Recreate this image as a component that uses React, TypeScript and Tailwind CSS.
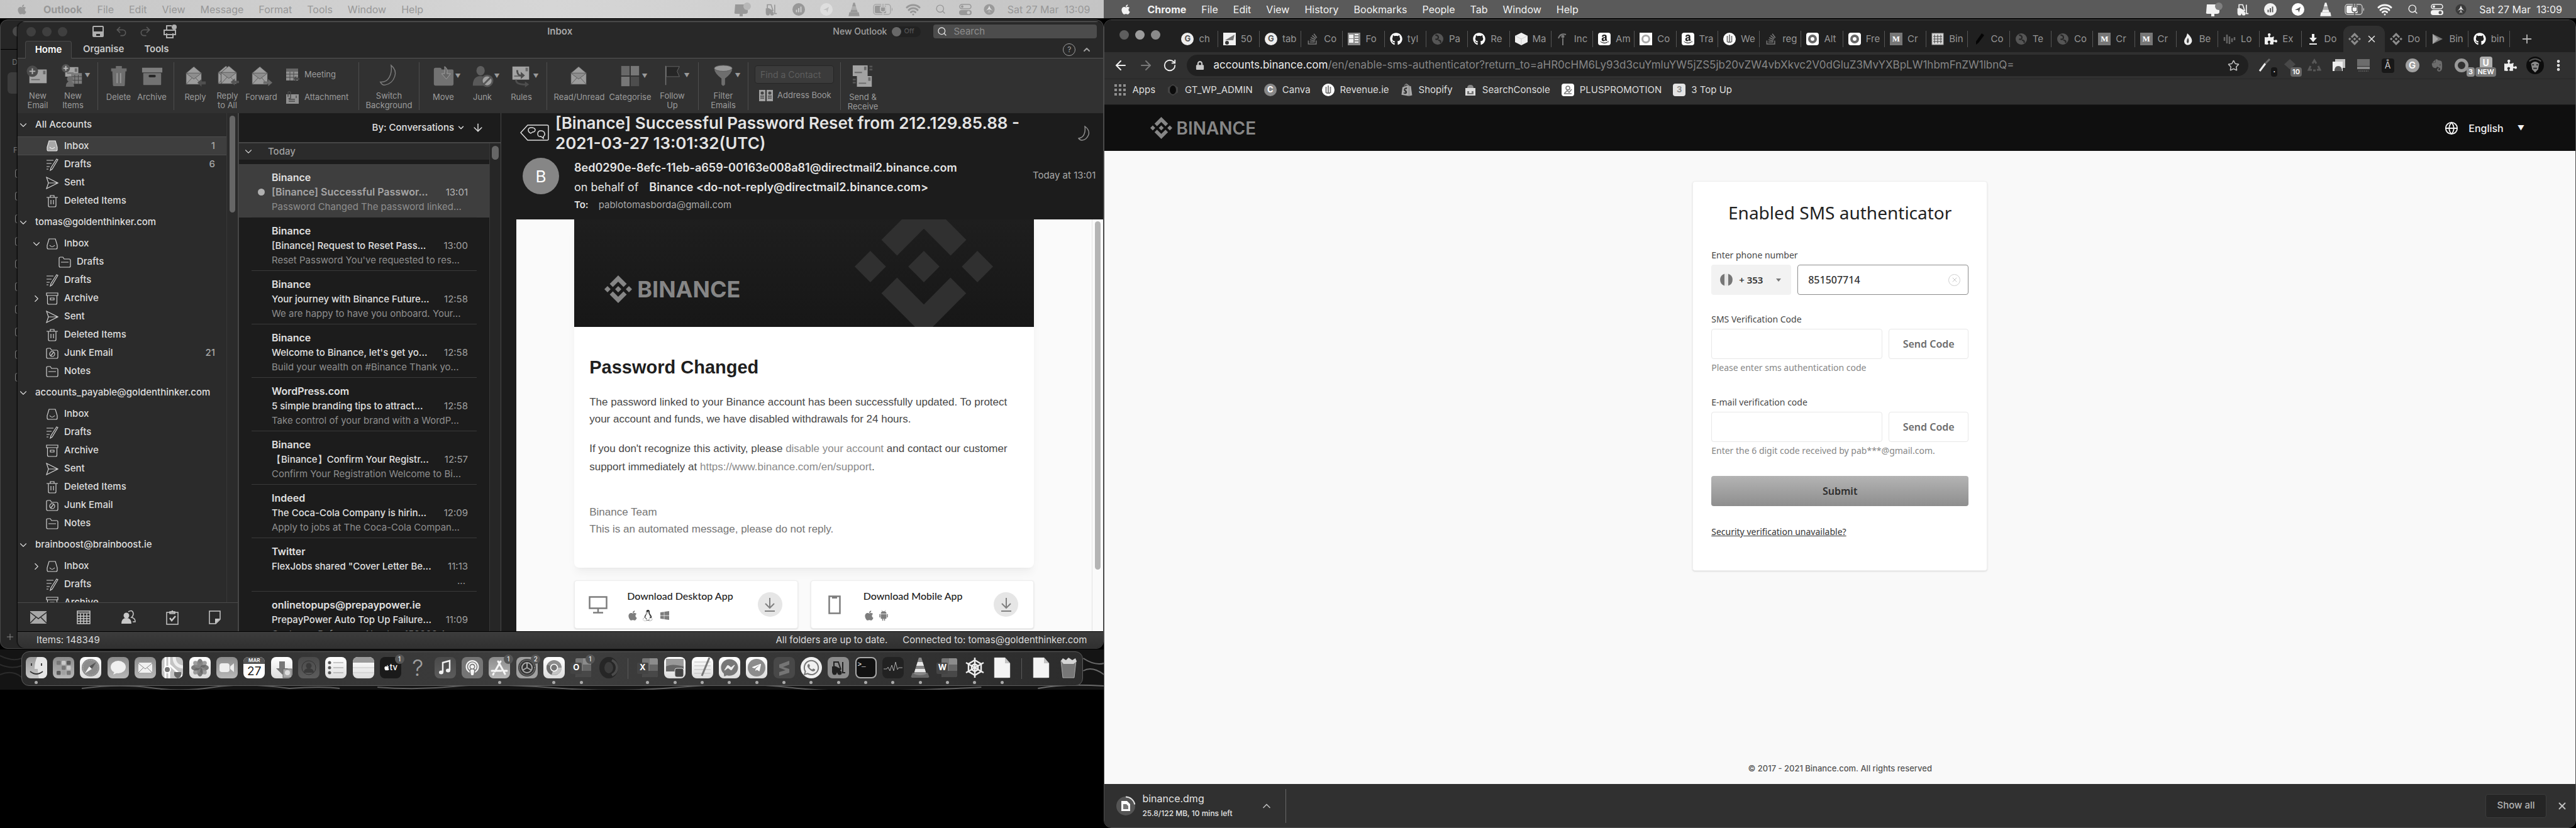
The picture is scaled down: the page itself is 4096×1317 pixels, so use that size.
import type { ReactNode } from "react";
import {
  ArrowDown, ArrowLeft, ArrowRight, ChevronDown, ChevronRight, ChevronUp, EllipsisVertical,
  Globe, Plus, Redo2, RotateCw, Search, Star, Undo2, Wifi, X,
} from "lucide-react";
import {
  FaAmazon, FaApple, FaEvernote, FaFacebookMessenger, FaGithub, FaLinux, FaLock,
  FaPodcast, FaPuzzlePiece, FaShopify, FaStackOverflow, FaTelegramPlane, FaWhatsapp, FaWindows,
} from "react-icons/fa";

/* ---------- shared drawings ---------- */

function BinanceMark({ className }: { className?: string }) {
  return (
    <svg viewBox="0 0 24 24" fill="currentColor" className={className} aria-hidden="true">
      <path d="M16.62 13.92l2.72 2.72L12 24l-7.36-7.36 2.72-2.72L12 18.58zM21.28 9.28L24 12l-2.72 2.72L18.57 12zM12 9.28L14.72 12 12 14.72 9.28 12zM2.72 9.28L5.43 12l-2.71 2.72L0 12zM12 0l7.36 7.36-2.72 2.72L12 5.42l-4.64 4.66-2.72-2.72z" />
    </svg>
  );
}

function Cone({ className }: { className?: string }) {
  return (
    <svg viewBox="0 0 24 28" className={className} aria-hidden="true">
      <path d="M10.5 1h3l2 7h-7z" fill="currentColor" />
      <path d="M8.5 8h7l2 6.5h-11z" fill="currentColor" opacity=".55" />
      <path d="M6.5 14.5h11l1.500 5H5z" fill="currentColor" />
      <path d="M3 19.5h18l1.500 7.500h-21z" fill="currentColor" />
    </svg>
  );
}

function Forklift({ className }: { className?: string }) {
  return (
    <svg viewBox="0 0 24 24" fill="none" stroke="currentColor" strokeWidth="2" className={className} aria-hidden="true">
      <path d="M5 16V3h7l4 12M5 10l11 5M19 3v17h4" />
      <path d="M3 11h5l6 5v3H3z" fill="currentColor" />
      <circle cx="6" cy="20" r="2.5" fill="currentColor" />
      <circle cx="14" cy="20" r="2.5" fill="currentColor" />
    </svg>
  );
}

function Robot({ className }: { className?: string }) {
  return (
    <svg viewBox="0 0 20 24" fill="currentColor" className={className} aria-hidden="true">
      <path d="M4 8q0-5 6-5t6 5zM4 9h12v9q0 1-1 1h-2v4h-2v-4H9v4H7v-4H5q-1 0-1-1zM1 9h2v7H1zM17 9h2v7h-2z" />
      <path d="M6 1l2 3M14 1l-2 3" stroke="currentColor" />
    </svg>
  );
}

/* ---------- menu bar ---------- */

function StatusIcons({ dim }: { dim: boolean }) {
  const cell = "flex items-center justify-center shrink-0";
  const hole = dim ? "#cccccc" : "#5a5a5a";
  return (
    <>
      <span className={`${cell} w-12`}>
        <svg viewBox="0 0 28 24" className="h-6 w-7" aria-hidden="true">
          <path d="M3 4h20v12q0 3-4 3H4q-3 0-2-3zM10 19h5v4h-5z" fill="currentColor" />
          <circle cx="22" cy="7" r="6" fill={dim ? "#b8b8b8" : "#808080"} />
        </svg>
      </span>
      <span className={`${cell} w-11`}><Forklift className="h-5 w-6" /></span>
      <span className={`${cell} w-11`}>
        <svg viewBox="0 0 20 20" className="size-5" aria-hidden="true">
          <circle cx="10" cy="10" r="10" fill="currentColor" />
          <path d="M6.5 14.5v-4M10 14.5V8M13.5 14.5v-9" stroke={hole} strokeWidth="2" />
        </svg>
      </span>
      <span className={`${cell} w-11`}>
        <svg viewBox="0 0 20 20" className="size-5" aria-hidden="true">
          <circle cx="10" cy="10" r="10" fill={dim ? "#dedede" : "#ffffff"} />
          <path d="M5 11l9-5-2.500 9-1.500-4z" fill={dim ? "#c2c2c2" : "#5a5a5a"} />
        </svg>
      </span>
      <span className={`${cell} w-11`}><Cone className="h-6 w-5" /></span>
      <span className={`${cell} w-12`}>
        <svg viewBox="0 0 32 18" className="h-[18px] w-8" aria-hidden="true">
          <rect x="1" y="1" width="27" height="16" rx="4" fill="none" stroke="currentColor" strokeWidth="1.5" opacity=".7" />
          <rect x="3" y="3" width="18" height="12" rx="2" fill="currentColor" />
          <path d="M14 0v5M18 0v5M12 5h8v5q0 3-4 3t-4-3zM16 13v5" stroke={hole} strokeWidth="1.5" fill="currentColor" />
          <path d="M30 6q2 3 0 6z" fill="currentColor" />
        </svg>
      </span>
      <span className={`${cell} w-12`}><Wifi className="size-6" strokeWidth={3} /></span>
      <span className={`${cell} w-10`}><Search className="size-[17px]" strokeWidth={2} /></span>
      <span className={`${cell} w-[38px]`}>
        <svg viewBox="0 0 20 18" className="h-[18px] w-5" aria-hidden="true">
          <rect x="1" y="1" width="18" height="7" rx="3.5" fill="none" stroke="currentColor" strokeWidth="1.5" />
          <circle cx="5" cy="4.5" r="2" fill="currentColor" />
          <rect x="0" y="10" width="20" height="8" rx="4" fill="currentColor" />
          <circle cx="15" cy="14" r="2.5" fill={hole} />
        </svg>
      </span>
      <span className={`${cell} w-[38px]`}>
        <svg viewBox="0 0 20 20" className="size-[18px]" aria-hidden="true">
          <circle cx="10" cy="10" r="9.5" fill={dim ? "#9a9a9a" : "#3a3a3a"} />
          <path d="M3 13q5-3 7-10 2 7 7 10-5-3-7-3t-7 3z" fill={dim ? "#dedede" : "#e8e8e8"} />
          <path d="M10 10l3 7-3-2-3 2z" fill="#b0b0b0" />
        </svg>
      </span>
    </>
  );
}

function MenuBar({ app, items, dim }: { app: string; items: string[]; dim: boolean }) {
  return (
    <nav
      className={
        dim
          ? "flex h-[29px] shrink-0 items-center bg-linear-to-r from-[#c6c6c6] via-[#d6d6d6] to-[#c4c4c4] pl-[26px] text-base text-[#989898]"
          : "flex h-[29px] shrink-0 items-center bg-[#5a5a5a] pl-[26px] text-base text-[#f2f2f2]"
      }
    >
      <FaApple className="size-[18px]" />
      <div className="ml-[25px] flex items-center gap-6">
        <button className="font-bold">{app}</button>
        {items.map((i) => (
          <button key={i}>{i}</button>
        ))}
      </div>
      <div className="ml-auto flex items-center">
        <StatusIcons dim={dim} />
        <span className="ml-2.5 mr-[22px] whitespace-pre">Sat 27 Mar  13:09</span>
      </div>
    </nav>
  );
}

/* ---------- Outlook ribbon ---------- */

function Envelope({ x = 0, y = 0, w = 26, h = 24 }: { x?: number; y?: number; w?: number; h?: number }) {
  return (
    <g>
      <rect x={x} y={y} width={w} height={h} fill="#a3a3a3" />
      <rect x={x + w - 6} y={y + 2} width={4} height={6} fill="#6a6a6a" />
      <path d={`M${x + 3} ${y + h - 6}h${w / 2}`} stroke="#6a6a6a" strokeWidth="2" />
    </g>
  );
}

function OpenLetter({ x = 0 }: { x?: number }) {
  return (
    <g transform={`translate(${x} 0)`}>
      <path d="M3 15L16 4l13 11v19H3z" fill="#9c9c9c" stroke="#3a3a3a" strokeWidth=".8" />
      <path d="M3 15h26L16 25zM3 34l10-11M29 34L19 23" fill="#8d8d8d" stroke="#5c5c5c" strokeWidth="1" />
    </g>
  );
}

const ribbonArt: Record<string, ReactNode> = {
  newEmail: (
    <>
      <Envelope x={5} y={10} w={29} h={23} />
      <circle cx="10" cy="13" r="9.5" fill="#4c4c4c" />
      <path d="M10 8v10M5 13h10" stroke="#b5b5b5" strokeWidth="2" />
    </>
  ),
  newItems: (
    <>
      <Envelope x={6} y={6} w={22} h={16} />
      <rect x="16" y="16" width="18" height="18" fill="#7c7c7c" />
      <path d="M16 22h18M16 28h18M22 19v15M28 19v15" stroke="#454545" strokeWidth="1" />
      <circle cx="7" cy="8" r="7" fill="#555" />
      <path d="M7 4v8M3 8h8" stroke="#bdbdbd" strokeWidth="2" />
      <circle cx="14" cy="26" r="5" fill="#6c6c6c" />
      <path d="M7 39q0-9 7-9t7 9z" fill="#6c6c6c" />
    </>
  ),
  trash: (
    <>
      <path d="M6 7h26v5H6zM14 3h10v4H14zM8 12h22l-1 23q0 2-2 2H11q-2 0-2-2z" fill="#6e6e6e" />
      <path d="M16 15v17M22 15v17" stroke="#a5a5a5" strokeWidth="1.5" />
    </>
  ),
  archive: (
    <>
      <rect x="2" y="6" width="34" height="8" fill="#7e7e7e" />
      <rect x="4" y="15" width="30" height="20" rx="1" fill="#727272" />
      <rect x="13" y="18" width="12" height="4" rx="2" fill="#262626" />
    </>
  ),
  reply: (
    <>
      <OpenLetter />
      <path d="M22 31l7-6v4h7v5h-7v4z" fill="#4f4f4f" />
    </>
  ),
  replyAll: (
    <>
      <OpenLetter />
      <OpenLetter x={5} />
      <path d="M24 31l7-6v4h7v4h-7v4z" fill="#555" />
    </>
  ),
  forward: (
    <>
      <OpenLetter />
      <path d="M37 31l-7-6v4h-8v4h8v4z" fill="#6a6a6a" />
    </>
  ),
  moon: <path d="M22 3q10 8 6 19-4 12-16 14-5 1-8-5 10 1 15-8 5-9 3-20z" fill="none" stroke="#7d7d7d" strokeWidth="1.5" />,
  move: (
    <>
      <path d="M3 9q0-3 3-3h7q3 0 3 3h18q2 0 2 2v22q0 3-3 3H6q-3 0-3-3z" fill="#727272" />
      <path d="M21 4q6 3 4 12h6l-7 9-8-9h5q1-7 0-12z" fill="#666" stroke="#a0a0a0" strokeWidth="1" />
    </>
  ),
  junk: (
    <>
      <ellipse cx="16" cy="11" rx="7" ry="8" fill="#5e5e5e" />
      <path d="M3 36q0-16 13-16 10 0 13 16z" fill="#595959" />
      <circle cx="27" cy="28" r="9" fill="#a0a0a0" stroke="#555" strokeWidth="3" />
      <path d="M21 34L33 22" stroke="#555" strokeWidth="3" />
    </>
  ),
  rules: (
    <>
      <Envelope x={4} y={4} w={28} h={22} />
      <path d="M12 10q0 10 8 9M10 26q0 9 16 8" fill="none" stroke="#4e4e4e" strokeWidth="3" />
      <path d="M18 13l7 6-7 6zM25 29l7 5-7 5z" fill="#4e4e4e" />
    </>
  ),
  read: <OpenLetter x={2} />,
  categorise: (
    <>
      <rect x="4" y="3" width="14" height="16" fill="#686868" />
      <rect x="20" y="3" width="14" height="16" fill="#777" />
      <rect x="4" y="21" width="14" height="16" fill="#777" />
      <rect x="20" y="21" width="14" height="16" fill="#4d4d4d" />
    </>
  ),
  flag: (
    <>
      <path d="M8 4v32" stroke="#777" strokeWidth="1.5" />
      <path d="M9 5h22l-4 8 4 9H9z" fill="#262626" stroke="#666" strokeWidth="1" />
    </>
  ),
  filter: (
    <>
      <path d="M4 8q0 8 12 17v10q3 5 6 0V25Q34 16 34 8z" fill="#6e6e6e" />
      <ellipse cx="19" cy="8" rx="15" ry="5" fill="#989898" stroke="#5a5a5a" />
    </>
  ),
  sendReceive: (
    <>
      <Envelope x={2} y={2} w={25} h={18} />
      <Envelope x={9} y={20} w={25} h={18} />
      <path d="M30 4h5M30 9h5M2 26h5M2 31h5" stroke="#555" strokeWidth="3" />
    </>
  ),
};

function Tool({ art, label, width, menu }: { art: string; label: string[]; width: string; menu?: boolean }) {
  return (
    <button className={`flex shrink-0 flex-col items-center ${width}`}>
      <span className="flex h-11 items-center justify-center">
        <span className="w-2.5" />
        <svg viewBox="0 0 38 40" className="h-[38px] w-9" aria-hidden="true">{ribbonArt[art]}</svg>
        <span className="w-2.5 text-[9px] text-[#9a9a9a]">{menu ? "▼" : ""}</span>
      </span>
      <span className="mt-1 text-[13px] leading-[15px] whitespace-nowrap text-[#9c9c9c]">
        {label.map((l) => (
          <span key={l} className="block">{l}</span>
        ))}
      </span>
    </button>
  );
}

function Group({ children, width }: { children: ReactNode; width: string }) {
  return <div className={`flex h-[76px] shrink-0 border-r border-[#4e4e4e] ${width}`}>{children}</div>;
}

function Ribbon() {
  return (
    <div className="flex h-[87px] shrink-0 items-start bg-[#313131] pt-1.5">
      <Group width="w-32 pl-1">
        <Tool art="newEmail" label={["New", "Email"]} width="w-14" />
        <Tool art="newItems" label={["New", "Items"]} width="w-14" menu />
      </Group>
      <Group width="w-[121px] pl-1.5">
        <Tool art="trash" label={["Delete"]} width="w-[53px]" />
        <Tool art="archive" label={["Archive"]} width="w-[53px]" />
      </Group>
      <Group width="w-[294px] pl-2">
        <Tool art="reply" label={["Reply"]} width="w-[51px]" />
        <Tool art="replyAll" label={["Reply", "to All"]} width="w-[51px]" />
        <Tool art="forward" label={["Forward"]} width="w-[57px]" />
        <div className="ml-2.5 flex flex-col text-[13px] text-[#9c9c9c]">
          <button className="flex h-10 items-center gap-2">
            <svg viewBox="0 0 22 22" className="size-[22px]" aria-hidden="true">
              <rect x="1" y="1" width="19" height="19" fill="#909090" />
              <path d="M1 1h19v5H1z" fill="#666" />
              <path d="M1 10h19M1 15h19M7 6v14M13 6v14" stroke="#4a4a4a" />
              <path d="M13 17l4-4v3h5v3h-5v3z" fill="#4a4a4a" />
            </svg>
            Meeting
          </button>
          <button className="flex h-8 items-center gap-2">
            <svg viewBox="0 0 22 22" className="size-[22px]" aria-hidden="true">
              <rect x="1" y="6" width="20" height="15" fill="#909090" />
              <path d="M5 17h10M5 14h10M17 8v4" stroke="#4a4a4a" strokeWidth="1.5" />
              <path d="M4 10V3q2-3 4 0v9q-2 2-3 0" fill="none" stroke="#4a4a4a" strokeWidth="1.5" />
            </svg>
            Attachment
          </button>
        </div>
      </Group>
      <Group width="w-24 justify-center">
        <Tool art="moon" label={["Switch", "Background"]} width="w-[90px]" />
      </Group>
      <Group width="w-[203px] pl-[7px]">
        <Tool art="move" label={["Move"]} width="w-[62px]" menu />
        <Tool art="junk" label={["Junk"]} width="w-[62px]" menu />
        <Tool art="rules" label={["Rules"]} width="w-[62px]" menu />
      </Group>
      <Group width="w-[241px] pl-[11px]">
        <Tool art="read" label={["Read/Unread"]} width="w-20" />
        <Tool art="categorise" label={["Categorise"]} width="w-[82px]" menu />
        <Tool art="flag" label={["Follow", "Up"]} width="w-[52px]" menu />
      </Group>
      <Group width="w-[79px] justify-center">
        <Tool art="filter" label={["Filter", "Emails"]} width="w-[70px]" menu />
      </Group>
      <Group width="w-[147px] px-2.5">
        <div className="flex flex-col">
          <input
            aria-label="Find a Contact"
            placeholder="Find a Contact"
            className="mt-[5px] h-[29px] w-[126px] rounded border border-[#262626] bg-[#3b3b3b] px-2 text-sm placeholder:text-[#5e5e5e]"
          />
          <button className="mt-[9px] flex items-center gap-1.5 pl-1.5 text-[13px] whitespace-nowrap text-[#9c9c9c]">
            <svg viewBox="0 0 24 20" className="h-5 w-6" aria-hidden="true">
              <path d="M1 1h10v18H1zM13 1h10v18H13z" fill="#a0a0a0" />
              <circle cx="6" cy="6" r="2.5" fill="#444" />
              <circle cx="18" cy="6" r="2.5" fill="#444" />
              <path d="M3 11h6M3 14h6M15 11h6M15 14h6" stroke="#444" strokeWidth="1.5" />
            </svg>
            Address Book
          </button>
        </div>
      </Group>
      <Tool art="sendReceive" label={["Send &", "Receive"]} width="w-[70px]" />
    </div>
  );
}

/* ---------- Outlook sidebar ---------- */

const folderArt: Record<string, ReactNode> = {
  inbox: <path d="M5 2h10l3 10v4q0 2-2 2H4q-2 0-2-2v-4zM6 12q4 5 8 0" />,
  inboxFull: (
    <>
      <path d="M5 2h10l3 10v4q0 2-2 2H4q-2 0-2-2v-4z" fill="#a8a8a8" stroke="#e8e8e8" />
      <path d="M6 12q4 5 8 0" stroke="#fff" />
    </>
  ),
  drafts: <path d="M1 3h11M1 8h8M1 13h5M1 17h3M17 1l2 1-9 15-3 2 1-4z" />,
  sent: <path d="M1 1l18 9-18 9 3-9zM4 10h15" />,
  trash: <path d="M1 4h18M7 4V1h6v3M4 4v13q0 2 2 2h8q2 0 2-2V4M8 8v7M12 8v7" />,
  archive: <path d="M1 1h18v4H1zM2.5 5v12q0 2 2 2h11q2 0 2-2V5M7 9h6v3H7z" />,
  folder: <path d="M1 4q0-2 2-2h4l2 3h8q2 0 2 2v9q0 2-2 2H3q-2 0-2-2zM4 10h12" />,
  junk: (
    <>
      <path d="M1 4q0-2 2-2h4l2 3h8q2 0 2 2v9q0 2-2 2H3q-2 0-2-2z" />
      <circle cx="10" cy="11" r="4" />
      <path d="M7.5 14l5-6" />
    </>
  ),
};

function FolderIcon({ kind }: { kind: string }) {
  return (
    <svg viewBox="0 0 20 20" fill="none" stroke="#d2d2d2" strokeWidth="1.2" className="size-5 shrink-0" aria-hidden="true">
      {folderArt[kind]}
    </svg>
  );
}

type Folder = { name: string; icon: string; count?: number; open?: boolean; closed?: boolean; sub?: boolean; on?: boolean };
const tail: Folder[] = [
  { name: "Sent", icon: "sent" },
  { name: "Deleted Items", icon: "trash" },
];
const accounts: { name: string; folders: Folder[] }[] = [
  {
    name: "All Accounts",
    folders: [{ name: "Inbox", icon: "inboxFull", count: 1, on: true }, { name: "Drafts", icon: "drafts", count: 6 }, ...tail],
  },
  {
    name: "tomas@goldenthinker.com",
    folders: [
      { name: "Inbox", icon: "inbox", open: true },
      { name: "Drafts", icon: "folder", sub: true },
      { name: "Drafts", icon: "drafts" },
      { name: "Archive", icon: "archive", closed: true },
      ...tail,
      { name: "Junk Email", icon: "junk", count: 21 },
      { name: "Notes", icon: "folder" },
    ],
  },
  {
    name: "accounts_payable@goldenthinker.com",
    folders: [
      { name: "Inbox", icon: "inbox" },
      { name: "Drafts", icon: "drafts" },
      { name: "Archive", icon: "archive" },
      ...tail,
      { name: "Junk Email", icon: "junk" },
      { name: "Notes", icon: "folder" },
    ],
  },
  {
    name: "brainboost@brainboost.ie",
    folders: [
      { name: "Inbox", icon: "inbox", closed: true },
      { name: "Drafts", icon: "drafts" },
      { name: "Archive", icon: "archive" },
    ],
  },
];

function FolderRow({ f }: { f: Folder }) {
  return (
    <button
      className={
        f.on
          ? "flex h-[30px] w-full items-center border-y border-[#4d4d4d] bg-[#3e3e3e] pr-[18px] pl-[21px] text-left"
          : "flex h-[29px] w-full items-center pr-[18px] pl-[21px] text-left"
      }
    >
      <span className="flex w-6 shrink-0">
        {f.open && <ChevronDown className="size-[18px]" strokeWidth={1.5} />}
        {f.closed && <ChevronRight className="size-[18px]" strokeWidth={1.5} />}
      </span>
      {f.sub && <span className="w-5" />}
      <FolderIcon kind={f.icon} />
      <span className="ml-[9px]">{f.name}</span>
      {f.count && <span className="ml-auto text-[#a8a8a8]">{f.count}</span>}
    </button>
  );
}

function Sidebar() {
  return (
    <aside className="flex w-[352px] shrink-0 flex-col border-r-2 border-[#474747] bg-[#2b2b2b] text-[15px] font-medium text-[#dedede]">
      <div className="flex min-h-0 flex-1">
        <div className="min-w-0 flex-1 basis-0 overflow-hidden">
          {accounts.map((a, i) => (
            <section key={a.name}>
              <h2 className={i === 0 ? "flex h-[37px] items-center gap-2.5" : "flex h-[39px] items-center gap-2.5"}>
                <ChevronDown className="size-[18px] shrink-0" strokeWidth={1.5} />
                <span className="whitespace-nowrap">{a.name}</span>
              </h2>
              {a.folders.map((f, j) => (
                <FolderRow key={j} f={f} />
              ))}
            </section>
          ))}
        </div>
        <div className="w-[18px] border-l border-[#383838] px-1 pt-1">
          <div className="h-[154px] rounded-full bg-[#666]" />
        </div>
      </div>
      <nav className="flex h-[46px] shrink-0 items-center justify-between border-t border-[#4a4a4a] px-5 text-[#b0b0b0]">
        <button aria-label="Mail">
          <svg viewBox="0 0 26 20" className="h-5 w-[26px]">
            <rect width="26" height="20" fill="#a8a8a8" />
            <path d="M0 2l13 10L26 2M0 19l9-9M26 19l-9-9" stroke="#2b2b2b" strokeWidth="1.5" fill="none" />
          </svg>
        </button>
        <button aria-label="Calendar">
          <svg viewBox="0 0 22 22" className="size-[22px]" fill="none" stroke="#c8c8c8" strokeWidth="1.5">
            <rect x="1" y="1" width="20" height="20" />
            <path d="M1 4h20M1 9h20M1 13h20M1 17h20M6 5v16M11 5v16M16 5v16" />
          </svg>
        </button>
        <button aria-label="People">
          <svg viewBox="0 0 24 24" className="size-6">
            <circle cx="9" cy="9" r="4.5" fill="#c8c8c8" />
            <path d="M1 22q0-9 8-9t8 9z" fill="#c8c8c8" />
            <path d="M12 3q7-4 8 3 0 4-3 6 6 1 6 7h-4" fill="none" stroke="#c8c8c8" strokeWidth="1.5" />
          </svg>
        </button>
        <button aria-label="Tasks">
          <svg viewBox="0 0 20 24" className="h-6 w-5" fill="none" stroke="#c8c8c8" strokeWidth="1.5">
            <path d="M1 4h18v19H1zM6 6V3h3q1-3 2 0h3v3z" />
            <path d="M6 13l3 4 6-7" strokeWidth="2.5" />
          </svg>
        </button>
        <button aria-label="Notes" className="mr-1.5">
          <svg viewBox="0 0 20 22" className="h-[22px] w-5">
            <path d="M1 1h17v13l-7 7H1z" fill="none" stroke="#c8c8c8" strokeWidth="1.5" />
            <path d="M18 13l-8 8v-8z" fill="#c8c8c8" />
          </svg>
        </button>
      </nav>
    </aside>
  );
}

/* ---------- Outlook message list ---------- */

const mails = [
  ["Binance", "[Binance] Successful Passwor...", "13:01", "Password Changed The password linked..."],
  ["Binance", "[Binance] Request to Reset Pass...", "13:00", "Reset Password You've requested to res..."],
  ["Binance", "Your journey with Binance Future...", "12:58", "We are happy to have you onboard. Your..."],
  ["Binance", "Welcome to Binance, let's get yo...", "12:58", "Build your wealth on #Binance Thank yo..."],
  ["WordPress.com", "5 simple branding tips to attract...", "12:58", "Take control of your brand with a WordP..."],
  ["Binance", "【Binance】Confirm Your Registr...", "12:57", "Confirm Your Registration Welcome to Bi..."],
  ["Indeed", "The Coca-Cola Company is hirin...", "12:09", "Apply to jobs at The Coca-Cola Compan..."],
  ["Twitter", "FlexJobs shared \"Cover Letter Be...", "11:13", "..."],
  ["onlinetopups@prepaypower.ie", "PrepayPower Auto Top Up Failure...", "11:09", "Customer Reference Number 159308 A..."],
];

function MessageList() {
  return (
    <section className="flex w-[417px] shrink-0 flex-col border-r border-[#474747] bg-[#1c1c1c] text-[15px] text-[#e0e0e0]">
      <div className="flex h-12 shrink-0 items-center justify-end border-b-2 border-[#474747] pr-[26px]">
        <button className="flex items-center gap-1 font-medium">
          By: Conversations <ChevronDown className="size-3.5" strokeWidth={2.5} />
        </button>
        <button aria-label="Sort order" className="ml-2.5"><ArrowDown className="size-5" strokeWidth={1.8} /></button>
      </div>
      <div className="flex min-h-0 flex-1 basis-0">
        <div className="min-w-0 flex-1 overflow-hidden">
          <h2 className="flex h-[26px] items-center bg-[#2b2b2b] pl-1.5 font-medium text-[#a0a0a0]">
            <ChevronDown className="mr-[22px] size-[18px] text-[#d0d0d0]" strokeWidth={1.5} />
            Today
          </h2>
          <ul className="pt-[7px]">
            {mails.map(([from, subject, time, preview], i) => (
              <li key={i} className={i === 0 ? "h-[85px] bg-[#3e3e3e] px-5" : "h-[85px] px-5"}>
                <button className="flex h-full w-full flex-col border-b border-[#3a3a3a] pt-[9px] pr-3.5 pl-8 text-left whitespace-nowrap">
                  <span className="block text-base leading-6 font-semibold">{from}</span>
                  <span className="relative flex w-full justify-between leading-[23px]">
                    {i === 0 && <span className="absolute top-1.5 -left-[22px] size-[11px] rounded-full bg-[#b0b0b0]" />}
                    <span className={i === 0 ? "text-base leading-[23px] font-semibold text-[#a6a6a6]" : "font-medium"}>{subject}</span>
                    <span className={i === 0 ? "text-[#b4b4b4]" : "text-[#a0a0a0]"}>{time}</span>
                  </span>
                  <span className={preview === "..." ? "block self-end pr-1 leading-[23px] text-[#8e8e8e]" : "block leading-[23px] text-[#8e8e8e]"}>
                    {preview}
                  </span>
                </button>
              </li>
            ))}
          </ul>
        </div>
        <div className="w-[18px] border-l border-[#383838] bg-[#262626] px-[3px] pt-1">
          <div className="h-[22px] rounded-full bg-[#666]" />
        </div>
      </div>
    </section>
  );
}

/* ---------- Outlook reading pane ---------- */

function DownloadCard({ title, device, systems }: { title: string; device: ReactNode; systems: ReactNode }) {
  return (
    <div className="flex h-[77px] flex-1 items-center rounded border border-[#ededed] bg-white pr-6 pl-5 shadow-sm">
      <div className="flex w-[34px] justify-center">{device}</div>
      <div className="ml-[29px]">
        <h3 className="font-[Lato] text-base leading-6 font-medium text-[#1e1e1e]">{title}</h3>
        <div className="mt-2.5 flex h-[18px] items-center gap-1.5 text-[#7d7d7d]">{systems}</div>
      </div>
      <button aria-label={title} className="ml-auto flex size-[39px] items-center justify-center rounded-full bg-[#e6e6e6]">
        <svg viewBox="0 0 20 24" className="h-6 w-5" fill="none" stroke="#808080" strokeWidth="2">
          <path d="M10 1v16M3 10l7 7 7-7M2 22h16" />
        </svg>
      </button>
    </div>
  );
}

function ReadingPane() {
  return (
    <article className="flex min-w-0 flex-1 flex-col bg-[#1c1c1c] text-[#e4e4e4]">
      <header className="h-[169px] shrink-0">
        <div className="flex h-[71px]">
          <svg viewBox="0 0 46 26" className="mt-[18px] ml-[30px] h-[26px] w-[46px] shrink-0" fill="none" stroke="#dcdcdc" strokeWidth="1.5" aria-hidden="true">
            <path d="M12 1h31q2 0 2 2v20q0 2-2 2H12L1 13z" />
            <path d="M17 14q-4-2-4-5 0-4 5-4t6 3q0 4-4 4l-3 2zM37 22v-3q3-2 2-5-1-4-6-4t-5 5 5 4z" />
          </svg>
          <h1 className="ml-2.5 w-[740px] text-[26px] leading-8 font-semibold">
            [Binance] Successful Password Reset from 212.129.85.88 -<br />2021-03-27 13:01:32(UTC)
          </h1>
          <svg viewBox="0 0 20 24" className="mt-5 mr-5 ml-auto h-6 w-5" fill="none" stroke="#8c8c8c" strokeWidth="1.5" aria-hidden="true">
            <path d="M11 1q8 6 6 13-3 8-10 9-4 0-6-3 7-1 9-7 2-5 1-12z" />
          </svg>
        </div>
        <div className="flex">
          <div className="ml-[34px] flex size-[58px] shrink-0 items-center justify-center rounded-full bg-[#868686] text-[26px] text-white">B</div>
          <div className="ml-6">
            <p className="text-lg leading-[31px] font-semibold">8ed0290e-8efc-11eb-a659-00163e008a81@directmail2.binance.com</p>
            <p className="text-lg leading-[31px]">
              on behalf of <span className="ml-3 font-semibold">Binance &lt;do-not-reply@directmail2.binance.com&gt;</span>
            </p>
            <p className="text-[15px] leading-[25px] text-[#a8a8a8]">
              <span className="mr-4 font-semibold text-[#e4e4e4]">To:</span>
              pablotomasborda@gmail.com
            </p>
          </div>
          <time className="mt-[17px] mr-3 ml-auto text-[15px] text-[#a8a8a8]">Today at 13:01</time>
        </div>
      </header>
      <div className="ml-6 flex min-h-0 flex-1 basis-0 overflow-hidden bg-[#fafafa]">
        <div className="flex-1">
          <div className="mx-auto w-[731px] font-['Liberation_Sans'] text-[17px] text-[#474747]">
            <div className="rounded-b-lg bg-white shadow-lg shadow-black/5">
              <div className="relative h-[171px] overflow-hidden bg-linear-to-b from-[#1e1e1e] to-[#171717]">
                <BinanceMark className="absolute -top-[35px] left-[446px] size-[220px] text-[#303030]" />
                <div className="flex items-center pt-[84px] pl-12 font-[Inter] text-[36px] font-bold text-[#868686]">
                  <BinanceMark className="mr-2 size-11" />
                  BINANCE
                </div>
              </div>
              <div className="px-6 pt-[46px] pb-12">
                <h2 className="text-[29px] leading-9 font-bold text-[#1e1e1e]">Password Changed</h2>
                <p className="mt-6 leading-[27px]">
                  The password linked to your Binance account has been successfully updated. To protect
                  <br />
                  your account and funds, we have disabled withdrawals for 24 hours.
                </p>
                <p className="mt-[19px] leading-[29px]">
                  If you don't recognize this activity, please <a href="#disable" className="text-[#8a8a8a]">disable your account</a> and contact our customer
                  <br />
                  support immediately at <a href="#support" className="text-[#8a8a8a]">https://www.binance.com/en/support</a>.
                </p>
                <p className="mt-11 leading-[27px] text-[#757575]">
                  Binance Team
                  <br />
                  This is an automated message, please do not reply.
                </p>
              </div>
            </div>
            <div className="mt-5 flex gap-5">
              <DownloadCard
                title="Download Desktop App"
                device={
                  <svg viewBox="0 0 30 28" className="h-7 w-[30px]" fill="none" stroke="#7d7d7d" strokeWidth="2.5">
                    <path d="M1.5 1.5h27v18h-27zM15 20v6M7 26.5h16" />
                  </svg>
                }
                systems={
                  <>
                    <FaApple className="size-[18px]" />
                    <FaLinux className="size-[18px] text-[#2a2a2a]" />
                    <FaWindows className="ml-1 size-4" />
                  </>
                }
              />
              <DownloadCard
                title="Download Mobile App"
                device={
                  <svg viewBox="0 0 20 30" className="h-[30px] w-5" fill="none" stroke="#7d7d7d" strokeWidth="2.5">
                    <path d="M1.5 1.5h17v27h-17z" />
                    <path d="M6 3h8" strokeWidth="4" />
                  </svg>
                }
                systems={
                  <>
                    <FaApple className="size-[18px]" />
                    <Robot className="h-[18px] w-4" />
                  </>
                }
              />
            </div>
          </div>
        </div>
        <div className="w-[18px] border-l border-[#e4e4e4] px-1 pt-[3px]">
          <div className="h-[554px] rounded-full bg-[#b4b4b4]" />
        </div>
      </div>
    </article>
  );
}

function Outlook() {
  return (
    <div className="mt-0.5 flex min-h-0 flex-1 basis-0 rounded-xl border border-[#4a4a4a] bg-[#262626]">
      <div className="flex w-[27px] shrink-0 flex-col items-end text-sm text-[#777]">
        <span className="mt-2.5 h-4 w-2 rounded-l-full bg-[#4a4a4a]" />
        <span className="mt-5 w-full border-t border-black" />
        <span className="mt-3 shrink-0 text-xs">D</span>
        <span className="mt-2 h-[34px] w-4 shrink-0 rounded-l-md bg-[#3c3c3c]" />
        <span className="mt-[82px] shrink-0 text-xs">F</span>
        {[0, 1, 2, 3, 4, 5, 6, 7, 8, 9].map((i) => (
          <span key={i} className="mt-[22px] h-3.5 w-1 shrink-0 rounded-l-full border border-r-0 border-[#7c7c7c]" />
        ))}
        <Plus className="mt-auto mr-1 mb-2.5 size-4 shrink-0 text-[#8a8a8a]" strokeWidth={1.5} />
      </div>
      <div className="mt-0.5 flex min-w-0 flex-1 flex-col overflow-hidden rounded-xl bg-[#282828] shadow-[-1px_0_2px_#000]">
        <div className="flex h-[31px] shrink-0 items-center border-t border-[#6a6a6a] pl-3.5">
          <div className="flex gap-2.5">
            <span className="size-[15px] rounded-full bg-[#3f3f3f]" />
            <span className="size-[15px] rounded-full bg-[#3f3f3f]" />
            <span className="size-[15px] rounded-full bg-[#3f3f3f]" />
          </div>
          <div className="ml-10 flex w-[134px] items-center justify-between">
            <button aria-label="Save">
              <svg viewBox="0 0 18 18" className="size-[18px]">
                <path d="M1 2q0-1 1-1h14q1 0 1 1v14q0 1-1 1H2q-1 0-1-1z" fill="none" stroke="#b0b0b0" strokeWidth="2" />
                <path d="M2 9h14v8h-4v-4H6v4H2z" fill="#b0b0b0" />
              </svg>
            </button>
            <button aria-label="Undo"><Undo2 className="size-5 text-[#5a5a5a]" /></button>
            <button aria-label="Redo"><Redo2 className="size-5 text-[#5a5a5a]" /></button>
            <button aria-label="Print">
              <svg viewBox="0 0 22 22" className="size-[22px]" fill="none" stroke="#b0b0b0" strokeWidth="2">
                <path d="M6 9V2h8M2 9h18v7H2zM6 14v7h10v-7" />
                <circle cx="18" cy="4" r="4" fill="#b0b0b0" stroke="none" />
              </svg>
            </button>
          </div>
          <h1 className="flex-1 pl-[175px] text-center text-[15px] font-semibold text-[#a8a8a8]">Inbox</h1>
          <label className="flex items-center gap-2 text-sm font-medium text-[#a0a0a0]">
            New Outlook
            <span className="flex h-[17px] w-[46px] items-center rounded-full bg-[#212121] text-[11px] text-[#555]">
              <input type="checkbox" className="mr-1 size-[15px] appearance-none rounded-full bg-[#686868]" />
              Off
            </span>
          </label>
          <div className="mr-2.5 ml-5 flex h-[22px] w-[260px] items-center rounded bg-[#4c4c4c] pl-1.5">
            <Search className="size-4 text-[#e4e4e4]" />
            <input aria-label="Search" placeholder="Search" className="ml-2.5 min-w-0 flex-1 bg-transparent text-[15px] placeholder:text-[#8c8c8c]" />
          </div>
        </div>
        <div className="flex h-7 shrink-0 items-stretch border-b border-[#555] pl-3 text-[15px] font-semibold text-[#c8c8c8]">
          <button className="-mb-px w-[74px] rounded-t border border-b-0 border-[#4a4a4a] bg-[#313131] text-white">Home</button>
          <button className="ml-[18px]">Organise</button>
          <button className="ml-8">Tools</button>
          <button aria-label="Help" className="ml-auto flex size-5 items-center justify-center self-center rounded-full border border-[#a0a0a0] text-xs font-normal text-[#a0a0a0]">?</button>
          <button aria-label="Collapse ribbon" className="mr-[18px] ml-2.5"><ChevronUp className="size-4 text-[#a0a0a0]" strokeWidth={3} /></button>
        </div>
        <Ribbon />
        <div className="flex min-h-0 flex-1">
          <Sidebar />
          <MessageList />
          <ReadingPane />
        </div>
        <footer className="flex h-[27px] shrink-0 items-center border-t border-black bg-linear-to-b from-[#3c3c3c] to-[#303030] pr-[26px] pl-[30px] text-[15px] text-[#dcdcdc]">
          <span>Items: 148349</span>
          <span className="ml-auto">All folders are up to date.</span>
          <span className="ml-6">Connected to: tomas@goldenthinker.com</span>
        </footer>
      </div>
    </div>
  );
}

/* ---------- Dock ---------- */

type DockItem = { name: string; tile?: string; art: ReactNode; dot?: boolean; badge?: string };
const light = "bg-linear-to-b from-white to-[#dcdcdc]";
const mid = "bg-linear-to-b from-[#8c8c8c] to-[#b8b8b8]";
const dark = "bg-linear-to-b from-[#4a4a4a] to-[#5c5c5c]";
const black = "bg-[#1a1a1a]";

function Svg({ children }: { children: ReactNode }) {
  return <svg viewBox="0 0 34 34" className="size-[34px]" fill="none" aria-hidden="true">{children}</svg>;
}
function OfficeTile({ letter }: { letter: string }) {
  return (
    <span className="relative flex size-[34px] items-center">
      <Svg>
        <rect x="8" y="2" width="25" height="30" rx="2" fill="#777" />
        <path d="M20 2h13v10H20z" fill="#8c8c8c" />
        <path d="M20 12h13v10H20z" fill="#666" />
        <path d="M8 22h25v8q0 2-2 2H10q-2 0-2-2z" fill="#484848" />
        <rect x="0" y="9" width="18" height="18" rx="2" fill="#444" />
      </Svg>
      <span className="absolute left-0 w-[18px] text-center text-[13px] font-bold text-white">{letter}</span>
    </span>
  );
}
function PaperArt() {
  return (
    <Svg>
      <path d="M5 1h17l8 9v23H5z" fill="#f4f4f4" stroke="#bbb" strokeWidth=".5" />
      <path d="M22 1v9h8z" fill="#c4c4c4" />
    </Svg>
  );
}

const dockA: DockItem[] = [
  {
    name: "Finder", tile: "bg-linear-to-b from-[#9a9a9a] to-[#c8c8c8]", dot: true,
    art: (
      <Svg>
        <path d="M18 0q-4 8-4 19h5q0 8 2 15h5q8 0 8-8V8q0-8-8-8z" fill="#e6e6e6" />
        <path d="M9 10v4M25 10v4M7 23q10 8 20 0" stroke="#333" strokeWidth="1.8" />
      </Svg>
    ),
  },
  {
    name: "Launchpad", tile: mid,
    art: (
      <Svg>
        {[0, 1, 2].map((r) => [0, 1, 2].map((c) => (
          <rect key={`${r}${c}`} x={6 + c * 8} y={6 + r * 8} width="6.5" height="6.5" rx="1.5" fill={["#777", "#c9c9c9", "#5a5a5a", "#a0a0a0"][(r * 3 + c) % 4]} />
        )))}
      </Svg>
    ),
  },
  {
    name: "Safari", tile: light,
    art: (
      <Svg>
        <circle cx="17" cy="17" r="14" fill="#8c8c8c" />
        <circle cx="17" cy="17" r="12" stroke="#c8c8c8" strokeDasharray="1 2" />
        <path d="M26 8L15 15l4 4z" fill="#555" /><path d="M8 26l7-11 4 4z" fill="#f4f4f4" />
      </Svg>
    ),
  },
  { name: "Messages", tile: mid, art: <Svg><ellipse cx="17" cy="16" rx="12" ry="10" fill="#f0f0f0" /><path d="M11 23l-2 5 7-3z" fill="#f0f0f0" /></Svg> },
  { name: "Mail", tile: mid, art: <Svg><rect x="6" y="9" width="22" height="16" rx="2" fill="#f0f0f0" /><path d="M6 10l11 9 11-9M6 25l8-8M28 25l-8-8" stroke="#8a8a8a" /></Svg> },
  {
    name: "Maps", tile: "bg-[#c4c4c4]",
    art: <Svg><path d="M6 0v34M12 0v34M12 12L34 32" stroke="#fff" strokeWidth="3" /><path d="M20 0q0 14 14 16" stroke="#eee" strokeWidth="5" /><circle cx="9" cy="20" r="5" fill="#777" stroke="#fff" strokeWidth="2" /><path d="M20 24h11v5q-2 4-5 5-4-1-6-5z" fill="#666" /></Svg>,
  },
  {
    name: "Photos", tile: light,
    art: (
      <Svg>
        {[0, 45, 90, 135, 180, 225, 270, 315].map((a, i) => (
          <ellipse key={a} cx="17" cy="10" rx="4.5" ry="7" fill={i % 2 ? "#888" : "#5c5c5c"} opacity=".8" transform={`rotate(${a} 17 17)`} />
        ))}
      </Svg>
    ),
  },
  { name: "FaceTime", tile: mid, art: <Svg><rect x="5" y="10" width="16" height="14" rx="4" fill="#eee" /><path d="M22 15l6-5v14l-6-5z" fill="#eee" /></Svg> },
  {
    name: "Calendar", tile: "bg-white",
    art: (
      <span className="flex size-full flex-col text-center">
        <span className="bg-[#555] text-[8px] leading-[11px] font-semibold text-white">MAR</span>
        <span className="text-[19px] leading-[23px] text-[#222]">27</span>
      </span>
    ),
  },
  { name: "Installer", tile: light, art: <Svg><path d="M13 7h9v11h5l-9 10-10-10h5z" fill="#777" /><rect x="19" y="19" width="14" height="14" fill="#a8a8a8" stroke="#666" /><circle cx="26" cy="25" r="4" fill="#ddd" /></Svg> },
  { name: "Contacts", tile: dark, art: <Svg><circle cx="17" cy="17" r="11" stroke="#333" /><circle cx="17" cy="14" r="4.5" fill="#3a3a3a" /><path d="M9 25q0-7 8-7t8 7z" fill="#3a3a3a" /></Svg> },
  { name: "Reminders", tile: light, art: <Svg><path d="M13 9h16M13 17h16M13 25h16" stroke="#999" /><g fill="#555"><circle cx="7" cy="9" r="2.5" /><circle cx="7" cy="17" r="2.5" /><circle cx="7" cy="25" r="2.5" /></g></Svg> },
  { name: "Notes", tile: light, art: <Svg><path d="M0 0h34v9H0z" fill="#999" /><path d="M0 17h34M0 25h34" stroke="#c4c4c4" /></Svg> },
  { name: "TV", tile: black, badge: "1", art: <span className="flex items-center text-[13px] font-medium text-white"><FaApple className="size-2.5" />tv</span> },
  { name: "Unknown", art: <span className="text-4xl leading-none font-light text-[#a0a0a0]">?</span> },
  { name: "Music", tile: dark, art: <Svg><path d="M13 24V9l11-3v15" stroke="#f0f0f0" strokeWidth="2.5" /><ellipse cx="10.5" cy="24.5" rx="3.5" ry="3" fill="#f0f0f0" /><ellipse cx="21.5" cy="21.5" rx="3.5" ry="3" fill="#f0f0f0" /></Svg> },
  { name: "Podcasts", tile: "bg-[#757575]", art: <FaPodcast className="size-6 text-[#f4f4f4]" /> },
  {
    name: "App Store", tile: mid, dot: true, badge: "1",
    art: <Svg><path d="M19 7L10 23M15 7l11 20M5 22h15M24 22h5M8 26l-1 2" stroke="#f6f6f6" strokeWidth="3" strokeLinecap="round" /></Svg>,
  },
  {
    name: "System Preferences", tile: "bg-[#a0a0a0]", badge: "2",
    art: <Svg><circle cx="17" cy="17" r="14" fill="#333" /><circle cx="17" cy="17" r="12" stroke="#888" strokeWidth="2" strokeDasharray="1 1" /><circle cx="17" cy="17" r="8" stroke="#aaa" strokeWidth="2" /><path d="M17 17V9M17 17l-7 4M17 17l7 4" stroke="#aaa" strokeWidth="2" /></Svg>,
  },
  {
    name: "Chrome", tile: light, dot: true,
    art: <Svg><circle cx="17" cy="17" r="12" fill="#8c8c8c" /><path d="M17 17h12A12 12 0 0 1 13 28z" fill="#c4c4c4" /><path d="M17 17L6 12a12 12 0 0 0 7 16z" fill="#6c6c6c" /><circle cx="17" cy="17" r="5.5" fill="#777" stroke="#fff" strokeWidth="1.5" /></Svg>,
  },
  { name: "Outlook", dot: true, badge: "1", art: <OfficeTile letter="O" /> },
  { name: "Opera", art: <Svg><ellipse cx="17" cy="17" rx="11" ry="13" stroke="#262626" strokeWidth="8" /><path d="M22 5q8 4 8 12t-8 12" stroke="#4a4a4a" strokeWidth="4" /></Svg> },
];

const dockB: DockItem[] = [
  { name: "Excel", dot: true, art: <OfficeTile letter="X" /> },
  { name: "Preview", tile: light, dot: true, art: <Svg><rect x="3" y="3" width="28" height="20" fill="#999" /><path d="M3 15q9-5 28 0v8H3z" fill="#666" /><rect x="17" y="18" width="14" height="14" rx="3" fill="#444" stroke="#ddd" /></Svg> },
  { name: "TextEdit", tile: light, dot: true, art: <Svg><path d="M4 8h26M4 14h26M4 20h26M4 26h26" stroke="#bbb" /><path d="M28 1L16 30" stroke="#777" strokeWidth="3" /></Svg> },
  { name: "Messenger", tile: light, dot: true, art: <FaFacebookMessenger className="size-7 text-[#777]" /> },
  { name: "Telegram", tile: light, dot: true, art: <span className="flex size-7 items-center justify-center rounded-full bg-[#8c8c8c]"><FaTelegramPlane className="size-4 text-white" /></span> },
  { name: "Sublime Text", tile: "bg-[#484848]", dot: true, art: <Svg><path d="M9 12l16-6v6L15 16l10 3v6L9 30v-6l10-3-10-4z" fill="#757575" /></Svg> },
  { name: "WhatsApp", dot: true, art: <span className="flex size-[34px] items-center justify-center rounded-full bg-[#f0f0f0]"><FaWhatsapp className="size-7 text-[#777]" /></span> },
  { name: "ForkLift", tile: "bg-[#8c8c8c]", dot: true, art: <Forklift className="size-6 text-[#222]" /> },
  { name: "Terminal", tile: "bg-[#111] border-2 border-[#aaa]", dot: true, art: <span className="size-full p-0.5 text-left font-['Liberation_Mono'] text-[11px] text-white">&gt;_</span> },
  { name: "Activity Monitor", tile: "bg-[#222]", dot: true, art: <Svg><path d="M2 19h5l2-3 3 6 3-9 3 9 3-14 3 12 2-3h6" stroke="#aaa" /></Svg> },
  {
    name: "VLC", dot: true,
    art: <Svg><path d="M5 25h24l3 8H2z" fill="#666" /><path d="M15 1h4l8 26q-10 4-20 0z" fill="#888" /><path d="M13 8h8l2 6H11zM9.5 19h15l1.5 5H8z" fill="#e8e8e8" /></Svg>,
  },
  { name: "Word", dot: true, art: <OfficeTile letter="W" /> },
  {
    name: "Web", dot: true,
    art: <Svg><path d="M17 1v32M3 9l28 16M31 9L3 25" stroke="#eee" strokeWidth="2.5" /><path d="M17 5l10 6v12l-10 6-10-6V11zM17 11l5 3v6l-5 3-5-3v-6z" stroke="#eee" strokeWidth="2.5" /></Svg>,
  },
  { name: "Document", dot: true, art: <PaperArt /> },
];

const dockC: DockItem[] = [
  { name: "Files", art: <PaperArt /> },
  { name: "Trash", art: <Svg><path d="M5 6h24l-3 27H8z" fill="#777" stroke="#aaa" /><path d="M5 6l3-4 5 3 4-4 6 4 5-3 2 5-5 4H9z" fill="#d4d4d4" /></Svg> },
];

function DockCell({ item }: { item: DockItem }) {
  return (
    <button aria-label={item.name} className="relative flex h-full flex-1 flex-col items-center pt-2">
      <span className={`flex size-[34px] items-center justify-center overflow-hidden rounded-lg ${item.tile ?? ""}`}>{item.art}</span>
      {item.dot && <span className="mt-1 size-[5px] rounded-full bg-[#aaa]" />}
      {item.badge && (
        <span className="absolute top-1 right-0 flex size-[15px] items-center justify-center rounded-full bg-[#555] text-[10px] text-white">{item.badge}</span>
      )}
    </button>
  );
}

function Dock() {
  return (
    <div className="z-10 mt-1 mr-[33px] mb-1.5 ml-[34px] flex h-[55px] shrink-0 rounded-xl border border-[#5c5c5c] bg-linear-to-r from-[#2c2c2c] via-[#3e3e3e] to-[#2c2c2c] px-px">
      {dockA.map((d) => <DockCell key={d.name} item={d} />)}
      <span className="mx-[9px] my-2.5 w-px bg-[#5a5a5a]" />
      {dockB.map((d) => <DockCell key={d.name} item={d} />)}
      <span className="mx-[9px] my-2.5 w-px bg-[#5a5a5a]" />
      {dockC.map((d) => <DockCell key={d.name} item={d} />)}
    </div>
  );
}

/* ---------- Chrome ---------- */

function Badge({ children, className }: { children: ReactNode; className: string }) {
  return <span className={`flex size-5 shrink-0 items-center justify-center text-[13px] font-bold ${className}`}>{children}</span>;
}

const favicons: Record<string, ReactNode> = {
  g: <Badge className="rounded-full bg-[#eee] text-[#555]">G</Badge>,
  sign: (
    <Badge className="bg-[#f0f0f0]"><svg viewBox="0 0 20 20" className="size-5"><path d="M3 12L18 3l-2 9z" fill="#777" /><circle cx="6" cy="16" r="3" fill="#333" /></svg></Badge>
  ),
  so: <FaStackOverflow className="size-5 text-[#777]" />,
  form: (
    <svg viewBox="0 0 20 20" className="size-5"><rect width="20" height="20" fill="#8a8a8a" /><path d="M3 4h5v4H3zM3 11h5v4H3zM11 3h6M11 7h6M11 11h6M11 15h6" fill="#eee" stroke="#eee" strokeWidth="2" /></svg>
  ),
  gh: <FaGithub className="size-5 text-white" />,
  globe: (
    <svg viewBox="0 0 20 20" className="size-[18px]"><circle cx="10" cy="10" r="10" fill="#555" /><path d="M6 3q6 1 5 5t-5 2M11 12q5 0 4 5" stroke="#262626" strokeWidth="2.5" fill="none" /></svg>
  ),
  box: <svg viewBox="0 0 20 20" className="size-5"><path d="M10 0l10 5v10l-10 5-10-5V5z" fill="#f0f0f0" /><path d="M0 5l10 5 10-5M10 10v10" stroke="#ccc" fill="none" /></svg>,
  i: <svg viewBox="0 0 20 20" className="size-5" fill="none" stroke="#777" strokeWidth="2"><path d="M3 9q3-9 12-6M10 9v11" /><circle cx="10" cy="6" r="1.5" fill="#777" /></svg>,
  amz: <Badge className="rounded bg-white text-[#222]"><FaAmazon className="size-4" /></Badge>,
  c: <Badge className="bg-white"><span className="size-3.5 rounded-full border-[3px] border-[#aaa]" /></Badge>,
  rev: <svg viewBox="0 0 20 20" className="size-5"><circle cx="10" cy="10" r="10" fill="#fff" /><path d="M10 3v13M6.5 5v10M13.5 5v10M7 15h6" stroke="#777" strokeWidth="1.8" /></svg>,
  o: <Badge className="rounded bg-white"><span className="size-3.5 rounded-full border-4 border-[#666]" /></Badge>,
  m: <Badge className="bg-[#777] font-['Liberation_Serif'] text-white">M</Badge>,
  grid: <svg viewBox="0 0 20 20" className="size-5"><rect x="1" y="1" width="18" height="18" fill="#ddd" stroke="#999" /><path d="M5 3v14M10 3v14M15 3v14M3 6h14M3 10h14M3 14h14" stroke="#444" /></svg>,
  pen: <svg viewBox="0 0 20 20" className="size-5"><path d="M14 1l4 3-9 12-4 3v-5z" fill="#050505" /></svg>,
  flame: <svg viewBox="0 0 20 20" className="size-5"><path d="M9 1q9 8 7 14-3 6-9 4-5-3-2-9 3-4 4-9z" fill="#eee" /><path d="M10 8q3 5 0 9-4-2 0-9z" fill="#444" /></svg>,
  bars: <svg viewBox="0 0 20 20" className="size-5"><path d="M2 7v6M6 3v14M10 6v12M14 9v6M18 7v5" stroke="#666" strokeWidth="2.5" /></svg>,
  puzzle: <FaPuzzlePiece className="size-5 text-[#f0f0f0]" />,
  dl: <svg viewBox="0 0 20 20" className="size-5"><path d="M8 2h4v6h4l-6 7-6-7h4zM4 17h12v2H4z" fill="#eee" /></svg>,
  bnb: <BinanceMark className="size-5 text-[#8c8c8c]" />,
  play: <svg viewBox="0 0 20 20" className="size-5"><path d="M2 2l16 8-16 8z" fill="#777" /><path d="M2 2l9 8-9 8z" fill="#a8a8a8" /></svg>,
};

const tabs: [string, string][] = [
  ["g", "ch"], ["sign", "50"], ["g", "tab"], ["so", "Co"], ["form", "Fo"], ["gh", "tyl"], ["globe", "Pa"], ["gh", "Re"],
  ["box", "Ma"], ["i", "Inc"], ["amz", "Am"], ["c", "Co"], ["amz", "Tra"], ["rev", "We"], ["so", "reg"], ["o", "Alt"],
  ["o", "Fre"], ["m", "Cr"], ["grid", "Bin"], ["pen", "Co"], ["globe", "Te"], ["globe", "Co"], ["m", "Cr"], ["m", "Cr"],
  ["flame", "Be"], ["bars", "Lo"], ["puzzle", "Ex"], ["dl", "Do"], ["bnb", ""], ["bnb", "Do"], ["play", "Bin"], ["gh", "bin"],
];

function Tabs() {
  return (
    <div className="flex h-[51px] shrink-0 items-stretch bg-[#202020]">
      <div className="ml-6 flex gap-2.5 pt-4">
        <span className="size-[15px] rounded-full bg-[#5e5e5e]" />
        <span className="size-[15px] rounded-full bg-[#9c9c9c]" />
        <span className="size-[15px] rounded-full bg-[#8a8a8a]" />
      </div>
      <div role="tablist" className="ml-[25px] flex min-w-0 flex-1 pt-[9px]">
        {tabs.map(([icon, label], i) =>
          label === "" ? (
            <button key={i} role="tab" aria-selected="true" aria-label="Binance" className="flex min-w-0 flex-1 basis-0 items-center rounded-t-xl bg-[#303030] pl-2">
              {favicons[icon]}
              <X className="ml-2 size-[18px] text-[#e4e4e4]" />
            </button>
          ) : (
            <button key={i} role="tab" className="flex min-w-0 flex-1 basis-0 items-center pl-2">
              <span className="flex w-5 shrink-0 justify-center">{favicons[icon]}</span>
              <span className="ml-2 text-[15px] whitespace-nowrap text-[#969696]">{label}</span>
              <span className={i === 27 ? "hidden" : "ml-auto h-[26px] w-px bg-[#555]"} />
            </button>
          ),
        )}
      </div>
      <button aria-label="New tab" className="mr-[66px] ml-4 pt-2"><Plus className="size-[22px] text-[#b4b4b4]" strokeWidth={2} /></button>
    </div>
  );
}

function Extension({ children, tag, tagClass }: { children: ReactNode; tag?: string; tagClass?: string }) {
  return (
    <button className="relative flex h-[34px] w-[39px] shrink-0 items-center justify-center">
      {children}
      {tag && <span className={`absolute -bottom-px rounded-sm px-[3px] text-[11px] leading-[15px] font-semibold text-white ${tagClass}`}>{tag}</span>}
    </button>
  );
}

function Toolbar() {
  return (
    <div className="flex h-[43px] shrink-0 items-center border-b border-[#282828] bg-[#303030]">
      <button aria-label="Back" className="ml-3.5"><ArrowLeft className="size-6 text-[#eee]" /></button>
      <button aria-label="Forward" className="ml-4"><ArrowRight className="size-6 text-[#777]" /></button>
      <button aria-label="Reload" className="ml-[15px]"><RotateCw className="size-[22px] text-[#eee]" /></button>
      <div className="ml-4 flex h-[34px] min-w-0 flex-1 items-center rounded-full bg-[#202020] px-3.5">
        <FaLock className="size-3.5 shrink-0 text-[#c8c8c8]" />
        <div className="ml-3.5 flex-1 text-[17px] whitespace-nowrap text-[#868686]">
          <span className="text-[#eee]">accounts.binance.com</span>
          /en/enable-sms-authenticator?return_to=aHR0cHM6Ly93d3cuYmluYW5jZS5jb20vZW4vbXkvc2V0dGluZ3MvYXBpLW1hbmFnZW1lbnQ=
        </div>
        <Star className="size-[19px] text-[#c0c0c0]" />
      </div>
      <div className="mr-[15px] ml-[7px] flex items-center">
        <Extension tag="·" tagClass="right-0 bg-[#161616]"><svg viewBox="0 0 22 22" className="size-[22px]"><path d="M2 20L11 8" stroke="#eee" strokeWidth="3" /><path d="M11 8l7-7" stroke="#666" strokeWidth="3" /></svg></Extension>
        <Extension tag="10" tagClass="right-0 bg-[#666]"><svg viewBox="0 0 22 22" className="size-5"><path d="M11 0l10 9-10 9L1 9z" fill="#484848" /></svg></Extension>
        <Extension><svg viewBox="0 0 22 22" className="size-[22px]" fill="none" stroke="#585858" strokeWidth="3"><path d="M8 8l3-5 3 5M5 12l-3 6h5M17 12l3 6h-5M9 19h4" /></svg></Extension>
        <Extension><svg viewBox="0 0 22 22" className="size-[22px]"><path d="M5 1h16v14H5z" fill="#c0c0c0" /><path d="M1 5h16v15H1z" fill="#eee" /><path d="M4 20q0-8 6-8t6 8z" fill="#555" /></svg></Extension>
        <Extension><svg viewBox="0 0 22 22" className="size-[22px]"><path d="M1 1h20v11H1z" fill="#6c6c6c" /><path d="M1 13h20v4H1z" fill="#888" /><path d="M3 20h16" stroke="#555" strokeWidth="2" strokeDasharray="2 1" /></svg></Extension>
        <Extension><span className="flex h-[23px] w-5 items-center justify-center rounded-sm bg-[#181818] text-sm text-[#ccc]">Å</span></Extension>
        <Extension><span className="flex size-[22px] items-center justify-center rounded-full bg-[#a0a0a0] text-[15px] font-semibold text-white">G</span></Extension>
        <Extension><FaEvernote className="size-[22px] text-[#6c6c6c]" /></Extension>
        <Extension tag="3" tagClass="-right-0.5 bg-[#8c8c8c]"><span className="size-[22px] rounded-full border-[5px] border-[#999]" /></Extension>
        <Extension tag="NEW" tagClass="bg-[#777]"><span className="mb-2 flex size-5 items-center justify-center rounded-sm bg-[#b0b0b0] text-sm font-bold text-white">U</span></Extension>
        <Extension><FaPuzzlePiece className="size-5 text-[#eee]" /></Extension>
        <Extension>
          <svg viewBox="0 0 30 30" className="size-7"><circle cx="15" cy="15" r="15" fill="#0c0c0c" /><path d="M8 12q7-7 14 0l-2 10-5 5-5-5z" fill="#8a8a8a" /><path d="M10 14h3M17 14h3M12 20h6" stroke="#222" strokeWidth="2" /><path d="M5 8q10-8 20 0" stroke="#555" strokeWidth="2" fill="none" /></svg>
        </Extension>
        <button aria-label="Menu" className="flex w-[30px] justify-center pl-1.5"><EllipsisVertical className="size-[22px] text-[#eee]" strokeWidth={3} /></button>
      </div>
    </div>
  );
}

const bookmarks: [ReactNode, string][] = [
  [<svg viewBox="0 0 20 20" className="size-5"><path d="M1 3h18M1 10h18M1 17h18" stroke="#909090" strokeWidth="4" strokeDasharray="4 3" /></svg>, "Apps"],
  [<svg viewBox="0 0 20 20" className="size-5"><path d="M10 1l8 5v8l-8 5-8-5V6z" fill="#444" /><ellipse cx="10" cy="10" rx="5" ry="7" fill="#0c0c0c" /></svg>, "GT_WP_ADMIN"],
  [<Badge className="rounded-full bg-[#888] text-white">C</Badge>, "Canva"],
  [favicons.rev, "Revenue.ie"],
  [<FaShopify className="size-5 text-[#a8a8a8]" />, "Shopify"],
  [<svg viewBox="0 0 20 20" className="size-5"><path d="M2 7h16v12H2z" fill="#ddd" /><path d="M5 7q0-5 5-5t5 5z" fill="#888" /><path d="M5 17v-5h3v3h4v-3h3v5" fill="#777" /></svg>, "SearchConsole"],
  [<Badge className="rounded bg-white"><svg viewBox="0 0 16 16" className="size-4" fill="none" stroke="#777" strokeWidth="1.5"><circle cx="8" cy="5" r="3" /><path d="M2 14l5-5 3 3 4-5M2 14h12" /></svg></Badge>, "PLUSPROMOTION"],
  [<Badge className="rounded bg-[#e4e4e4] text-[#888]">3</Badge>, "3 Top Up"],
];

function CodeField({ id, label, hint, gap }: { id: string; label: string; hint: string; gap: string }) {
  return (
    <div className={gap}>
      <label htmlFor={id} className="block text-sm leading-5 text-[#474747]">{label}</label>
      <div className="mt-[5px] flex gap-2.5">
        <input id={id} className="h-12 min-w-0 flex-1 rounded border border-[#e8e8e8] bg-white px-4" />
        <button type="button" className="w-[127px] rounded border border-[#e8e8e8] bg-white text-base font-semibold text-[#6c6c6c]">Send Code</button>
      </div>
      <p className="mt-1 text-sm leading-5 text-[#868686]">{hint}</p>
    </div>
  );
}

function BinancePage() {
  return (
    <div className="flex min-h-0 flex-1 flex-col bg-[#f9f9f9]">
      <header className="flex h-[73px] shrink-0 items-center bg-[#0f0f0f] pr-[81px] pl-[73px]">
        <a href="#home" className="flex items-center gap-1.5 text-[28px] font-semibold text-[#868686]">
          <BinanceMark className="size-[35px]" />
          BINANCE
        </a>
        <button className="ml-auto flex items-center text-base font-medium text-[#f4f4f4]">
          <Globe className="mr-4 size-[22px]" strokeWidth={2} />
          English
          <span className="ml-[22px] text-[11px]">▼</span>
        </button>
      </header>
      <main className="flex flex-1 flex-col items-center pt-12 font-['Noto_Sans']">
        <form className="w-[469px] rounded border border-[#efefef] bg-white px-[29px] pt-[29px] pb-[51px] shadow-sm">
          <h1 className="text-center text-[28px] leading-10 text-[#222]">Enabled SMS authenticator</h1>
          <label htmlFor="phone" className="mt-[38px] block text-sm leading-5 text-[#474747]">Enter phone number</label>
          <div className="mt-[5px] flex gap-2.5">
            <button type="button" className="flex h-12 w-[127px] items-center rounded bg-[#f2f2f2] pl-3.5 text-[15px] font-semibold text-[#333]">
              <svg viewBox="0 0 20 20" className="mr-2.5 size-5" aria-hidden="true">
                <path d="M7 .5a10 10 0 0 0 0 19zM13 .5a10 10 0 0 1 0 19z" fill="#777" />
                <path d="M7 .5h6v19H7z" fill="#e6e6e6" />
              </svg>
              + 353
              <svg viewBox="0 0 8 5" className="ml-auto mr-4 h-[5px] w-2"><path d="M0 0h8L4 5z" fill="#777" /></svg>
            </button>
            <div className="flex h-12 min-w-0 flex-1 items-center rounded border border-[#8c8c8c] pr-3 pl-4">
              <input id="phone" defaultValue="851507714" className="min-w-0 flex-1 text-base font-medium text-[#333]" />
              <button type="button" aria-label="Clear" className="flex size-[19px] items-center justify-center rounded-full border border-[#d0d0d0] text-[#c8c8c8]"><X className="size-3" /></button>
            </div>
          </div>
          <CodeField id="sms" label="SMS Verification Code" hint="Please enter sms authentication code" gap="mt-[29px]" />
          <CodeField id="mail" label="E-mail verification code" hint="Enter the 6 digit code received by pab***@gmail.com." gap="mt-[35px]" />
          <button type="button" className="mt-[30px] h-12 w-full rounded bg-linear-to-b from-[#b4b4b4] to-[#8e8e8e] text-base font-semibold text-[#2e2e2e]">Submit</button>
          <a href="#help" className="mt-[31px] block text-sm leading-5 text-[#333] underline">Security verification unavailable?</a>
        </form>
        <p className="mt-auto pb-3.5 font-[Inter] text-[13px] leading-[22px] font-medium text-[#555]">© 2017 - 2021 Binance.com. All rights reserved</p>
      </main>
    </div>
  );
}

function Chrome() {
  return (
    <div className="mt-0.5 flex min-h-0 flex-1 flex-col overflow-hidden rounded-xl border border-[#4e4e4e]">
      <Tabs />
      <Toolbar />
      <nav className="flex h-[41px] shrink-0 items-center gap-[18px] border-b border-[#1c1c1c] bg-[#303030] pb-1.5 pl-[15px] text-[15px] text-[#dedede]">
        {bookmarks.map(([icon, label]) => (
          <a key={label} href="#bookmark" className="flex items-center gap-[9px]">
            {icon}
            {label}
          </a>
        ))}
      </nav>
      <BinancePage />
      <footer className="flex h-[69px] shrink-0 items-center bg-[#303030] pl-[18px]">
        <svg viewBox="0 0 32 32" className="size-8" aria-hidden="true">
          <circle cx="16" cy="16" r="15" fill="#555" />
          <path d="M16 1.5a14.5 14.5 0 0 1 14.3 12" fill="none" stroke="#e4e4e4" strokeWidth="2" />
          <path d="M9 8h9l5 5v11H9z" fill="#fff" />
          <path d="M12 13h5l3 3v5h-8z" fill="#777" />
        </svg>
        <div className="ml-2.5 w-[188px] text-[#e4e4e4]">
          <p className="text-base leading-6">binance.dmg</p>
          <p className="text-xs leading-6 font-medium">25.8/122 MB, 10 mins left</p>
        </div>
        <button aria-label="Download options"><ChevronUp className="size-5 text-[#bbb]" /></button>
        <span className="ml-5 h-[54px] w-px bg-[#686868]" />
        <button className="mr-4 ml-auto h-[38px] w-[97px] rounded border border-[#3c3c3c] bg-[#252525] text-[15px] font-medium text-[#b4b4b4]">Show all</button>
        <button aria-label="Close downloads" className="mr-3"><X className="size-[18px] text-[#c0c0c0]" strokeWidth={2.5} /></button>
      </footer>
    </div>
  );
}

/* ---------- desktops ---------- */

function Wallpaper() {
  return (
    <svg viewBox="0 0 1755 64" preserveAspectRatio="none" className="absolute inset-x-0 bottom-0 h-16 w-full" fill="none" aria-hidden="true">
      <rect width="1755" height="64" fill="#141414" />
      <path d="M0 10q20 10 34 4M0 24q18 8 34 2M0 40q20-8 34 4" stroke="#2c2c2c" strokeWidth="2" />
      <path d="M130 62q60-8 110-1t100-1 120 2q50-4 80 0M600 60q60 5 120-1t160 2 200-1 180 1 300-1" stroke="#5c5c5c" strokeWidth="2" />
      <path d="M1722 14q18 12 33 8M1722 34q14-8 33 6M1650 62q40-8 105-4" stroke="#6a6a6a" strokeWidth="2" />
    </svg>
  );
}

export default function App() {
  return (
    <div className="flex min-h-screen items-stretch bg-black font-[Inter]">
      <div className="relative flex aspect-[8/5] w-3/7 shrink-0 flex-col self-start overflow-hidden">
        <Wallpaper />
        <div className="z-10 flex min-h-0 flex-1 flex-col">
          <MenuBar app="Outlook" items={["File", "Edit", "View", "Message", "Format", "Tools", "Window", "Help"]} dim />
          <Outlook />
        </div>
        <Dock />
      </div>
      <div className="flex h-screen min-w-0 flex-1 flex-col">
        <MenuBar app="Chrome" items={["File", "Edit", "View", "History", "Bookmarks", "People", "Tab", "Window", "Help"]} dim={false} />
        <Chrome />
      </div>
    </div>
  );
}
